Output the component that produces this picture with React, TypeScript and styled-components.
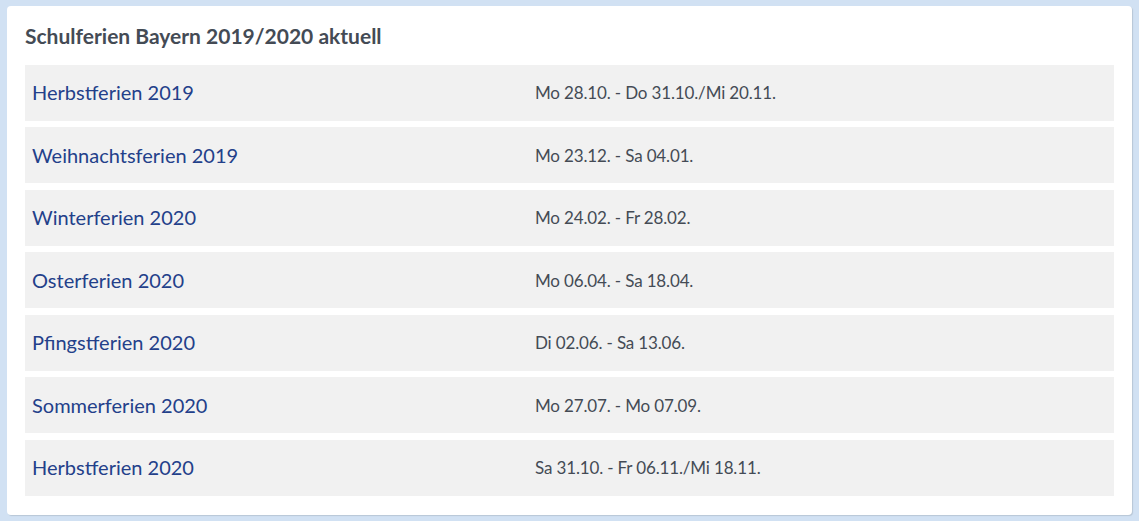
import React from "react";
import styled, { createGlobalStyle } from "styled-components";

const Global = createGlobalStyle`
  html, body { margin: 0; padding: 0; }
  body {
    background: #d1e1f3;
    font-family: Lato, "Open Sans", sans-serif;
  }
`;

const Page = styled.div`
  padding: 6px 7px 6px 7px;
`;

const Card = styled.section`
  width: 1125px;
  height: 509px;
  box-sizing: border-box;
  background: #fff;
  border-radius: 4px;
  box-shadow: 1px 1px 1px rgba(0, 0, 0, 0.12);
  padding: 18px 18px 20px;
`;

const Title = styled.h2`
  margin: 0 0 16.5px;
  height: 24px;
  line-height: 24px;
  font-size: 21px;
  font-weight: 700;
  color: #444b55;
`;

const List = styled.div`
  display: flex;
  flex-direction: column;
  gap: 6.5px;
`;

const Row = styled.div`
  display: grid;
  grid-template-columns: 503px 1fr;
  align-items: center;
  height: 56px;
  padding: 0 7px;
  background: #f1f1f1;
`;

const Name = styled.a`
  font-size: 20px;
  line-height: 24px;
  margin-top: -1px;
  color: #23408a;
  text-decoration: none;
`;

const Dates = styled.span`
  font-size: 17px;
  letter-spacing: -0.15px;
  color: #444b55;
`;

const data: [string, string][] = [
  ["Herbstferien 2019", "Mo 28.10. - Do 31.10./Mi 20.11."],
  ["Weihnachtsferien 2019", "Mo 23.12. - Sa 04.01."],
  ["Winterferien 2020", "Mo 24.02. - Fr 28.02."],
  ["Osterferien 2020", "Mo 06.04. - Sa 18.04."],
  ["Pfingstferien 2020", "Di 02.06. - Sa 13.06."],
  ["Sommerferien 2020", "Mo 27.07. - Mo 07.09."],
  ["Herbstferien 2020", "Sa 31.10. - Fr 06.11./Mi 18.11."],
];

export default function App() {
  return (
    <>
      <Global />
      <Page>
        <Card>
          <Title>Schulferien Bayern 2019/2020 aktuell</Title>
          <List>
            {data.map(([n, d]) => (
              <Row key={n}>
                <Name href="#">{n}</Name>
                <Dates>{d}</Dates>
              </Row>
            ))}
          </List>
        </Card>
      </Page>
    </>
  );
}
